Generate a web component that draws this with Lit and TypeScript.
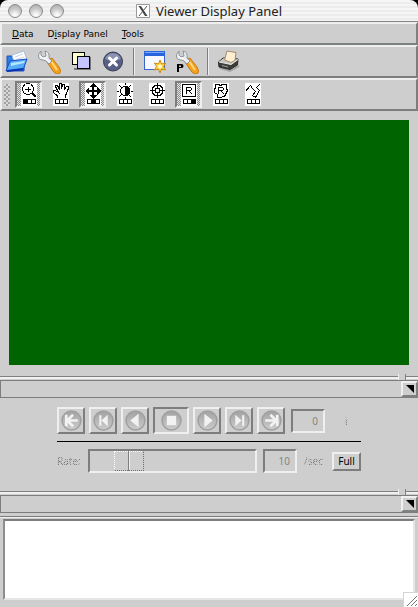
import { LitElement, html, svg, css } from "lit";
import { customElement, property, state } from "lit/decorators.js";
import { classMap } from "lit/directives/class-map.js";

const wrench = svg`
  <path d="M11 10 15 8l7 9q3 5 0 7-3 1-6-3l-6-9z" fill="#f5a11c" stroke="#c27a18"/>
  <path d="M14 11l6 9" stroke="#ffd878" stroke-width="2"/>
  <path d="M4 1 1.500 4.500Q1 10 6 10l3 1 3 3 3-3-3-3Q13 2 8 1l1 5-3 1-2-2z" fill="#e9ecee" stroke="#8d949a"/>
  <path d="M3 6q2 3 5 2l4 4" fill="none" stroke="#fff"/>`;

const toolIcons: Record<string, unknown> = {
  open: svg`
    <path d="M2 6h7l2 2h8v13H2z" fill="#2f7fe8" stroke="#1c50c0"/>
    <path d="M7 5 19 1l3 9-12 5z" fill="#fff" stroke="#a9bedd"/>
    <path d="M10 7l8-3M10 10l9-3" stroke="#c6d4ea"/>
    <path d="M1 21 5 11l17-2-4 11z" fill="#55adf8" stroke="#1849c4"/>
    <path d="M6 13l14-2-1 2-13 3z" fill="#b7e4ff"/>
    <path d="M2 21l16-2" stroke="#0a32b0" stroke-width="2"/>`,
  edit: wrench,
  copy: svg`
    <path d="M5 19h17M21 7v13" stroke="#777" stroke-width="2"/>
    <rect x="3.500" y="2.500" width="12" height="12" fill="#ffffd0" stroke="#000"/>
    <rect x="8.500" y="6.500" width="12" height="12" fill="#c4c4ff" stroke="#000"/>`,
  close: svg`
    <circle cx="12" cy="11.500" r="9.500" fill="#596084" stroke="#343a55"/>
    <path d="M4 9a8.500 8.500 0 0 1 16 0q-8 4-16 0" fill="#8c93b0"/>
    <path d="M8.500 8l7 7M15.500 8l-7 7" stroke="#fff" stroke-width="3" stroke-linecap="round"/>`,
  window: svg`
    <rect x="1.500" y="1.500" width="20" height="18" fill="#f6f9ff" stroke="#3a66c8"/>
    <path d="M1 1h21v5H1z" fill="#2865dc"/><path d="M2 2h19v1H2z" fill="#78a8f8"/>
    <path d="M17 10l1.500 4 4-1-2 3.500 2 3.500-4-1-1.500 4-1.500-4-4 1 2-3.500-2-3.500 4 1z" fill="#ffd84a" stroke="#d08a10"/>
    <circle cx="17" cy="16.500" r="2" fill="#fff8c8"/>`,
  prefs: svg`${wrench}
    <path d="M2 14h4.500q2 0 2 2t-2 2H4v4H2zM4 15.500v1.500h2v-1.500z" fill="#000" fill-rule="evenodd"/>`,
  print: svg`
    <path d="M3 18l10 3 9-5" fill="none" stroke="#a4a4a4" stroke-width="2"/>
    <path d="M1.500 12 6 8l15 1-.5 6-7.500 4.500-11-2.500z" fill="#3c3d39" stroke="#2a2b28"/>
    <path d="M2 11.500 7 8l14 1.500-7 5z" fill="#c9cac4"/>
    <path d="M7.500 10 10 1 19 2.500l-1 8-4 2z" fill="#ffeed0" stroke="#a08a6c"/>
    <path d="M2 12l12 2.500 7-5" fill="none" stroke="#efefea"/>
    <path d="M5 15.500l6 1.500" stroke="#9a9b94"/>`,
};

const modeIcons: Record<string, unknown> = {
  zoom: svg`<path d="M5 .5h4M3.500 1v2M10.500 1v2M1.500 4v4M12.500 4v4M2.500 2v2M11.500 2v2M2.500 8v2M11.500 8v2M3 10.500h2M9 10.500h2M5 11.500h4M4 6.500h6M7.500 4v5"/>
    <path d="M11 10l4 4" stroke-width="2.500"/>`,
  pan: svg`<path d="M4.500 15v-2L.5 9.500v-2h2l3 2-3-6v-1h2l2 4V.5h2V6l1-4.500h2v5l2-3h1.500v3l-2 5-1 2V15"/>`,
  move: svg`<path d="M8 2v12M2 8h12" stroke-width="2"/>
    <path d="M8 0l4 4H4zM8 16l4-4H4zM0 8l4-4v8zM16 8l-4-4v8z" fill="#000" stroke="none"/>`,
  contrast: svg`<circle cx="8" cy="8" r="4.500"/><path d="M8 3a5 5 0 0 1 0 10z" fill="#000"/>
    <path d="M8.500 0v2M8.500 14v2M0 8.500h2M14 8.500h2M2 2l2 2M12 4l2-2M2 14l2-2M12 12l2 2"/>`,
  target: svg`<circle cx="8.500" cy="7.500" r="5.500"/><circle cx="8.500" cy="7.500" r="2.500"/>
    <path d="M8.500 0v6M8.500 9v6M1 7.500h6M10 7.500h6"/>`,
  rect: svg`<path d="M1.500 1.500h13v12h-13zM5.500 11V4.500h4l1 1v1l-1 1h-4M8.500 8l2 3"/>`,
  polygon: svg`<path d="M2.500 1.500h3l2 1 2-1h4v4l1 2-2 4-1 2h-2l-1 1h-4v-3l-3-2v-3l1-2zM5.500 11V4.500h4l1 1v1l-1 1h-4M8.500 8l2 3"/>`,
  line: svg`<path d="M.5 8.500l5-6 2 3 3 3-3 4 3 2 4-7-3-3 3-3"/>`,
};

const playIcons: Record<string, unknown> = {
  "To start": svg`<path d="M5 4.500v11M16 10H7M11.500 4.500 6 10l5.500 5.500" fill="none" stroke="#f2f2f2" stroke-width="2.500"/>`,
  "Step back": svg`<path d="M6 5h2v10H6zM14 4.500v11L8 10z"/>`,
  "Play reverse": svg`<path d="M13 3.500v13L5 10z"/>`,
  Stop: svg`<path d="M5.500 5.500h9v9h-9z"/>`,
  "Play forward": svg`<path d="M7 3.500v13l8-6.500z"/>`,
  "Step forward": svg`<path d="M12.500 5h2v10h-2zM6 4.500v11l6-5.500z"/>`,
  "To end": svg`<path d="M15.500 4.500v11M4 10h9M9 4.500l5.500 5.500L9 15.500" fill="none" stroke="#f2f2f2" stroke-width="2.500"/>`,
};

const shared = css`
  * { box-sizing: border-box; }
  button, input, textarea { font: inherit; color: inherit; margin: 0; border-radius: 0; }
  button { padding: 0; background: none; border: none; }
  svg { display: block; flex: none; }
`;

@customElement("pane-header")
class PaneHeader extends LitElement {
  @property() label = "";
  static styles = [shared, css`
    :host { display: block; }
    .sash { height: 4px; border-top: 1px solid #7d817f; background: linear-gradient(#f0f0f0 2px, #cdcdcd 2px); position: relative; }
    .handle { position: absolute; right: 12px; top: -3px; width: 8px; height: 6px; background: #cecece; border-left: 1px solid #f0f0f0; border-right: 1px solid #7d817f; }
    .bar { display: flex; justify-content: flex-end; height: 18px; border: 1px solid #7d7d7d; border-right: none; background: #cecece; }
    .fold { display: grid; place-items: center; width: 17px; height: 16px; border: 2px solid; border-color: #f0f0f0 #7d817f #7d817f #f0f0f0; }
  `];
  render() {
    return html`
      <div class="sash"><div class="handle"></div></div>
      <div class="bar">
        <button class="fold" aria-label=${this.label}>
          <svg width="8" height="8"><path d="M0 0h8v8z" fill="#000" /></svg>
        </button>
      </div>`;
  }
}

@customElement("app-root")
class AppRoot extends LitElement {
  @state() private modes = new Set(["zoom", "move", "rect"]);
  private buttons: Record<string, number> = { zoom: 0, move: 1, rect: 2 };

  static styles = [shared, css`
    :host { display: flex; flex-direction: column; min-height: 100vh; background: #cecece; font: 10px/14px "Noto Sans", "Open Sans", sans-serif; color: #000; }
    .top { background: #000; }
    .title { position: relative; display: flex; align-items: center; justify-content: center; height: 22px; border-bottom: 1px solid #858585; border-radius: 8px 8px 0 0; background: repeating-linear-gradient(#f5f5f5 0 2px, #ececec 2px 4px); }
    .lights { position: absolute; left: 8px; top: 4px; display: flex; gap: 7px; }
    .light { width: 14px; height: 14px; border: 1px solid #8b8b8b; border-radius: 50%; background: radial-gradient(circle at 50% 85%, #fafafa 10%, #c9c9c9 55%, #a4a4a4); }
    .name { display: flex; align-items: center; gap: 6px; margin: 0; font: 13px/18px "Noto Sans", sans-serif; color: #222; }
    .bar { display: flex; align-items: center; height: 33px; border: 2px solid; border-color: #efefef #7d7d7d #7d7d7d #efefef; }
    .menu { height: 23px; gap: 14px; padding-left: 10px; border-color: #efefef #7d817f #7d817f #efefef; font: 9px/14px "DejaVu Sans", sans-serif; }
    .menu u { text-underline-offset: 1px; }
    .tools { gap: 8px; padding-left: 3px; }
    .tools hr { width: 2px; height: 27px; margin: 0; border: 0; border-left: 1px solid #7d7d7d; background: #efefef; }
    .modes { gap: 5px; }
    .grip { width: 6px; height: 22px; margin-left: 2px; background: repeating-conic-gradient(#a2a2a2 0 25%, #dadada 0 50%) 0 0 / 4px 4px; }
    .mode { display: grid; place-items: center; width: 27px; height: 27px; border: 2px solid transparent; }
    .mode.on { border-color: #7d7d7d #efefef #efefef #7d7d7d; background: repeating-conic-gradient(#8e8e8e 0 25%, #e2e2e2 0 50%) 0 0 / 2px 2px; }
    .view { flex: 1; display: flex; padding: 9px 9px 11px; }
    .canvas { flex: 1; min-height: 120px; background: #006400; }
    .player { display: flex; flex-direction: column; align-items: center; padding: 9px 0 18px; }
    .controls { width: 304px; }
    .row { display: flex; align-items: center; }
    .play { gap: 4px; padding-bottom: 7px; border-bottom: 1px solid #000; }
    .key { display: grid; place-items: center; width: 28px; height: 27px; border: 2px solid; border-color: #efefef #7d7d7d #7d7d7d #efefef; }
    .key.stop { width: 36px; border-color: #7d7d7d #efefef #efefef #7d7d7d; }
    .field { width: 34px; height: 24px; padding: 0 5px; border: 2px solid; border-color: #7d7d7d #efefef #efefef #7d7d7d; background: #cecece; color: #858585; text-align: right; }
    .play .field { margin-left: 2px; }
    .dim { color: transparent; background: repeating-conic-gradient(#6c6c6c 0 25%, #bcbcbc 0 50%) 0 0 / 2px 2px; background-clip: text; -webkit-background-clip: text; }
    .unit { margin-left: 16px; }
    .rate { padding-top: 7px; }
    .rate .label { width: 31px; }
    .slider { flex: 1; min-width: 0; height: 24px; padding: 0 24px; appearance: none; border: 2px solid; border-color: #7d7d7d #efefef #efefef #7d7d7d; background: #cecece; }
    .slider::-webkit-slider-thumb { appearance: none; width: 30px; height: 20px; border: 1px dotted; border-color: #fff #6d6d6d #6d6d6d #fff; background: linear-gradient(90deg, transparent 13px, #7d7d7d 13px, #7d7d7d 14px, #efefef 14px, #efefef 15px, transparent 15px); }
    .rate .field { margin: 0 7px 0 6px; }
    .per { flex: none; width: 19px; white-space: nowrap; }
    .full { flex: none; width: 29px; height: 19px; margin-left: 9px; border: 2px solid; border-color: #efefef #7d7d7d #7d7d7d #efefef; }
    .log { position: relative; display: flex; margin-top: 3px; padding: 1px 3px 7px; border-top: 1px solid #7d7d7d; box-shadow: inset 0 1px #efefef; }
    .text { flex: 1; min-width: 0; height: 81px; margin-top: 1px; resize: none; padding: 2px 4px; border: 2px solid; border-color: #7d7d7d #e6e6e6 #e6e6e6 #8d8d8d; background: #fff; outline: none; }
    .corner { position: absolute; right: 0; bottom: 0; background: #fff; border: 1px solid #d5d5d5; border-width: 1px 0 0 1px; }
  `];

  private toggle(name: string) {
    const next = new Set(this.modes);
    next.has(name) ? next.delete(name) : next.add(name);
    this.modes = next;
  }

  private tool(name: string, label: string) {
    return html`<button aria-label=${label}><svg width="24" height="24" viewBox="0 0 24 24" fill="none">${toolIcons[name]}</svg></button>`;
  }

  private mode(name: string) {
    const on = this.modes.has(name);
    const mouse = this.buttons[name];
    return html`<button class=${classMap({ mode: true, on })} aria-label=${name} aria-pressed=${on} @click=${() => this.toggle(name)}>
      <svg width="16" height="23" fill="none" stroke="#000" shape-rendering="crispEdges">
        <path d="M0 0h16v23H0z" fill="#fff" stroke="none" />
        ${modeIcons[name]}
        <path d="M2.500 16.500h12v4h-12zM6.500 16v5M10.500 16v5" />
        ${mouse === undefined ? "" : svg`<path d="M${2 + mouse * 4} 16h5v5h-5z" fill="#000" stroke="none" />`}
      </svg></button>`;
  }

  render() {
    return html`
      <header class="top">
        <div class="title">
          <div class="lights">
            <button class="light" aria-label="Close window"></button>
            <button class="light" aria-label="Minimize window"></button>
            <button class="light" aria-label="Zoom window"></button>
          </div>
          <h1 class="name">
            <svg width="14" height="14"><path d="M.5.5h13v13H.5z" fill="#fff" stroke="#999" />
              <path d="M2.500 2h2.500l6.500 10H9z" fill="#444" /><path d="M11 2 3 12" stroke="#555" /></svg>
            Viewer Display Panel
          </h1>
        </div>
      </header>
      <nav class="bar menu">
        <button><u>D</u>ata</button><button>D<u>i</u>splay Panel</button><button><u>T</u>ools</button>
      </nav>
      <div class="bar tools">
        ${this.tool("open", "Open")}${this.tool("edit", "Adjust")}${this.tool("copy", "Copy")}${this.tool("close", "Unload")}
        <hr />
        ${this.tool("window", "New panel")}${this.tool("prefs", "Panel options")}
        <hr />
        ${this.tool("print", "Print")}
      </div>
      <div class="bar modes">
        <div class="grip"></div>
        ${Object.keys(modeIcons).map((n) => this.mode(n))}
      </div>
      <main class="view"><div class="canvas"></div></main>
      <pane-header label="Fold animation controls"></pane-header>
      <section class="player">
        <div class="controls">
          <div class="row play">
            ${Object.keys(playIcons).map((n) => html`
              <button class=${classMap({ key: true, stop: n === "Stop" })} aria-label=${n} disabled>
                <svg width="21" height="21" viewBox="0 0 20 20">
                  <defs><linearGradient id="disc" x2="0" y2="1"><stop stop-color="#a2a2a2" /><stop offset="1" stop-color="#cccccc" /></linearGradient></defs>
                  <circle cx="10" cy="10" r="9" fill="url(#disc)" stroke="#a0a0a0" stroke-width="1.500" />
                  <g fill="#f2f2f2">${playIcons[n]}</g>
                </svg>
              </button>`)}
            <input class="field" aria-label="Frame" value="0" disabled />
            <span class="dim unit">i</span>
          </div>
          <div class="row rate">
            <label class="dim label" for="rate">Rate:</label>
            <input class="slider" id="rate" type="range" min="0" max="91" value="0" disabled />
            <input class="field" aria-label="Frames per second" value="10" disabled />
            <span class="dim per">/sec</span>
            <button class="full">Full</button>
          </div>
        </div>
      </section>
      <pane-header label="Fold messages"></pane-header>
      <section class="log">
        <textarea class="text" aria-label="Messages" readonly></textarea>
        <svg class="corner" width="15" height="15"><path d="M3 13 13 3M7 13l6-6M11 13l2-2" stroke="#777" /></svg>
      </section>`;
  }
}
